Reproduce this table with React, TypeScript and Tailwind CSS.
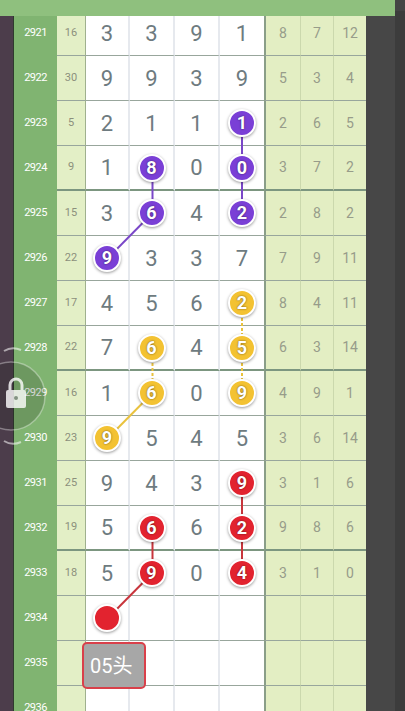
import React from 'react';

type Ball = { col: number; color: 'p' | 'y' | 'r'; n?: number };

interface Row {
  year: string;
  sum: string;
  digits: (number | null)[];
  balls: Ball[];
  right: string[];
}

const ballBg = {
  p: 'bg-[#7a3fd6]',
  y: 'bg-[#f3c232]',
  r: 'bg-[#e2232f]',
};

const rows: Row[] = [
  { year: '2921', sum: '16', digits: [3, 3, 9, 1], balls: [], right: ['8', '7', '12'] },
  { year: '2922', sum: '30', digits: [9, 9, 3, 9], balls: [], right: ['5', '3', '4'] },
  { year: '2923', sum: '5', digits: [2, 1, 1, null], balls: [{ col: 3, color: 'p', n: 1 }], right: ['2', '6', '5'] },
  { year: '2924', sum: '9', digits: [1, null, 0, null], balls: [{ col: 1, color: 'p', n: 8 }, { col: 3, color: 'p', n: 0 }], right: ['3', '7', '2'] },
  { year: '2925', sum: '15', digits: [3, null, 4, null], balls: [{ col: 1, color: 'p', n: 6 }, { col: 3, color: 'p', n: 2 }], right: ['2', '8', '2'] },
  { year: '2926', sum: '22', digits: [null, 3, 3, 7], balls: [{ col: 0, color: 'p', n: 9 }], right: ['7', '9', '11'] },
  { year: '2927', sum: '17', digits: [4, 5, 6, null], balls: [{ col: 3, color: 'y', n: 2 }], right: ['8', '4', '11'] },
  { year: '2928', sum: '22', digits: [7, null, 4, null], balls: [{ col: 1, color: 'y', n: 6 }, { col: 3, color: 'y', n: 5 }], right: ['6', '3', '14'] },
  { year: '2929', sum: '16', digits: [1, null, 0, null], balls: [{ col: 1, color: 'y', n: 6 }, { col: 3, color: 'y', n: 9 }], right: ['4', '9', '1'] },
  { year: '2930', sum: '23', digits: [null, 5, 4, 5], balls: [{ col: 0, color: 'y', n: 9 }], right: ['3', '6', '14'] },
  { year: '2931', sum: '25', digits: [9, 4, 3, null], balls: [{ col: 3, color: 'r', n: 9 }], right: ['3', '1', '6'] },
  { year: '2932', sum: '19', digits: [5, null, 6, null], balls: [{ col: 1, color: 'r', n: 6 }, { col: 3, color: 'r', n: 2 }], right: ['9', '8', '6'] },
  { year: '2933', sum: '18', digits: [5, null, 0, null], balls: [{ col: 1, color: 'r', n: 9 }, { col: 3, color: 'r', n: 4 }], right: ['3', '1', '0'] },
  { year: '2934', sum: '', digits: [null, null, null, null], balls: [{ col: 0, color: 'r' }], right: ['', '', ''] },
  { year: '2935', sum: '', digits: [null, null, null, null], balls: [], right: ['', '', ''] },
  { year: '2936', sum: '', digits: [null, null, null, null], balls: [], right: ['', '', ''] },
];

const mainW = ['w-[44px]', 'w-[45px]', 'w-[45px]', 'w-[44px]'];
const rightW = ['w-[36px] border-l-2 border-l-[#8a9e88]', 'w-[33px] border-l border-l-[#cbd8ad]', 'w-[33px] border-l border-l-[#cbd8ad]'];

const colX = [108, 152.5, 197.5, 242];
const cy = (i: number) => 33 + 45 * i;

function BallView({ b }: { b: Ball }) {
  return (
    <span
      className={`relative z-10 flex h-[28px] w-[28px] items-center justify-center rounded-full border-2 border-white text-[18px] font-bold leading-none text-white shadow-[0_1px_3px_rgba(0,0,0,0.4)] [text-shadow:0_0_2px_rgba(0,0,0,0.6)] ${ballBg[b.color]}`}
    >
      {b.n}
    </span>
  );
}

export default function App() {
  const line = (a: [number, number], b: [number, number], color: string, dashed = false) => (
    <line
      x1={a[0]}
      y1={a[1]}
      x2={b[0]}
      y2={b[1]}
      stroke={color}
      strokeWidth={2}
      strokeDasharray={dashed ? '3 2' : undefined}
    />
  );

  return (
    <div className="relative h-[711px] w-[405px] overflow-hidden bg-[#444444] font-['Roboto','Liberation_Sans',sans-serif]">
      {/* top bar */}
      <div className="absolute left-0 top-0 z-20 h-[16px] w-[395px] bg-[#8fc07e]" />

      <div className="flex pt-[11px]">
        <div className="w-[14px] self-stretch border-r border-[#2f3a2e] bg-[#4c3d4b]" />

        <div className="flex w-[352px] flex-col">
          {rows.map((r, i) => {
            const groupEnd = i % 4 === 3;
            const hb = groupEnd ? 'border-b-2 border-b-[#7c9680]' : 'border-b border-b-[#98a69c]';
            return (
              <div key={r.year} className="flex h-[45px]">
                <div className="flex w-[43px] items-center justify-center bg-[#80b471] text-[11px] tracking-[-0.5px] text-white">
                  {r.year}
                </div>
                <div className={`flex w-[29px] items-center justify-center border-r border-r-[#9fb08e] bg-[#e3efc6] text-[11px] text-[#8c8f7c] ${hb}`}>
                  {r.sum}
                </div>
                {r.digits.map((d, c) => {
                  const ball = r.balls.find((b) => b.col === c);
                  return (
                    <div
                      key={c}
                      className={`relative flex items-center justify-center bg-white text-[22px] text-[#6e7b80] ${mainW[c]} ${c < 3 ? 'border-r-2 border-r-[#e6e9ee]' : ''} ${hb}`}
                    >
                      {ball ? <BallView b={ball} /> : d}
                      {r.year === '2935' && c === 0 && (
                        <span className="absolute left-[-4px] top-[1px] z-10 flex h-[47px] w-[64px] items-center rounded-[5px] border-2 border-[#d9404a] bg-[#a7a7a7] pl-[6px] text-[20px] text-white font-['Roboto','Noto_Sans_CJK_SC',sans-serif]">
                          05头
                        </span>
                      )}
                    </div>
                  );
                })}
                {r.right.map((v, c) => (
                  <div
                    key={c}
                    className={`flex items-center justify-center bg-[#e3eec3] text-[14px] text-[#979c8a] ${rightW[c]} ${hb}`}
                  >
                    {v}
                  </div>
                ))}
              </div>
            );
          })}
        </div>

        <div className="flex w-[39px] self-stretch">
          <div className="w-[29px] bg-[#474747]" />
          <div className="w-[10px] bg-[#3c3c3c]" />
        </div>
      </div>

      {/* trend lines */}
      <svg className="pointer-events-none absolute left-0 top-0 z-[5]" width={405} height={711}>
        {line([colX[3], cy(2)], [colX[3], cy(3)], '#7a47c8')}
        {line([colX[1], cy(3)], [colX[1], cy(4)], '#7a47c8')}
        {line([colX[3], cy(3)], [colX[3], cy(4)], '#7a47c8')}
        {line([colX[1], cy(4)], [colX[0], cy(5)], '#7a47c8')}
        {line([colX[3], cy(6)], [colX[3], cy(7)], '#e9c23e', true)}
        {line([colX[1], cy(7)], [colX[1], cy(8)], '#e9c23e', true)}
        {line([colX[3], cy(7)], [colX[3], cy(8)], '#e9c23e', true)}
        {line([colX[1], cy(8)], [colX[0], cy(9)], '#e9c23e')}
        {line([colX[3], cy(10)], [colX[3], cy(11)], '#c8353c')}
        {line([colX[1], cy(11)], [colX[1], cy(12)], '#c8353c')}
        {line([colX[3], cy(11)], [colX[3], cy(12)], '#c8353c')}
        {line([colX[1], cy(12)], [colX[0], cy(13)], '#c8353c')}
      </svg>

      {/* floating lock button */}
      <svg className="pointer-events-none absolute left-0 top-[340px] z-30" width={70} height={112}>
        <circle cx={11} cy={56} r={34} fill="rgba(20,30,20,0.18)" stroke="rgba(255,255,255,0.35)" strokeWidth={1.5} />
        <path d="M4 11 Q12 6 21 10" fill="none" stroke="rgba(255,255,255,0.55)" strokeWidth={2} />
        <path d="M4 101 Q12 106 21 102" fill="none" stroke="rgba(255,255,255,0.55)" strokeWidth={2} />
        <path d="M10 50 V45 a6 6 0 0 1 12 0 V50" fill="none" stroke="rgba(255,255,255,0.8)" strokeWidth={3} />
        <rect x={6} y={50} width={20} height={18} rx={2} fill="rgba(255,255,255,0.8)" />
        <circle cx={16} cy={58} r={2} fill="rgba(90,110,90,0.7)" />
      </svg>
    </div>
  );
}
